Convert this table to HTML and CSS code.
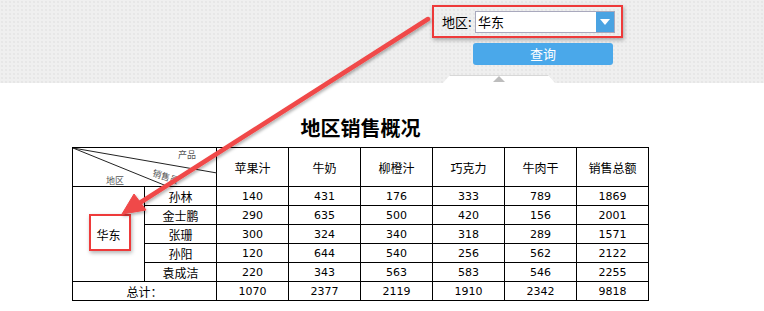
FILE: index.html
```html
<!DOCTYPE html>
<html lang="zh">
<head>
<meta charset="utf-8">
<link rel="stylesheet" href="styles.css">
</head>
<body>
<header class="toolbar">
  <div class="filters">
    <div class="filter-row">
      <span class="filter-label">地区:</span>
      <div class="select">
        <span class="select-value">华东</span>
        <span class="select-btn"><svg width="10" height="6" viewBox="0 0 10 6"><path d="M0 0H10L5 6Z" fill="#fff"/></svg></span>
      </div>
    </div>
    <button class="query-btn">查询</button>
    <div class="collapse-tab"><span class="tri"></span></div>
  </div>
</header>
<main class="report">
  <h1 class="title">地区销售概况</h1>
  <table class="sales">
    <colgroup><col><col><col><col><col><col><col><col></colgroup>
    <tr class="head">
      <td colspan="2" class="diag">
        <svg class="diag-lines" width="144" height="39" viewBox="0 0 144 39"><path d="M0 0L144 25M0 0L96 39" stroke="#222" stroke-width="1" fill="none"/></svg>
        <span class="d-prod">产品</span>
        <span class="d-sales">销售员</span>
        <span class="d-area">地区</span>
      </td>
      <th>苹果汁</th><th>牛奶</th><th>柳橙汁</th><th>巧克力</th><th>牛肉干</th><th>销售总额</th>
    </tr>
    <tr><td rowspan="5" class="area">华东</td><td class="name">孙林</td><td>140</td><td>431</td><td>176</td><td>333</td><td>789</td><td>1869</td></tr>
    <tr><td class="name">金士鹏</td><td>290</td><td>635</td><td>500</td><td>420</td><td>156</td><td>2001</td></tr>
    <tr><td class="name">张珊</td><td>300</td><td>324</td><td>340</td><td>318</td><td>289</td><td>1571</td></tr>
    <tr><td class="name">孙阳</td><td>120</td><td>644</td><td>540</td><td>256</td><td>562</td><td>2122</td></tr>
    <tr><td class="name">袁成洁</td><td>220</td><td>343</td><td>563</td><td>583</td><td>546</td><td>2255</td></tr>
    <tr><td colspan="2" class="name">总计：</td><td>1070</td><td>2377</td><td>2119</td><td>1910</td><td>2342</td><td>9818</td></tr>
  </table>
</main>
<div class="mark-box"></div>
<svg class="arrow" width="764" height="311" viewBox="0 0 764 311">
  <defs>
    <filter id="sh" x="-10%" y="-10%" width="120%" height="120%"><feDropShadow dx="1" dy="2" stdDeviation="1.5" flood-color="#000" flood-opacity="0.3"/></filter>
  </defs>
  <g filter="url(#sh)" fill="#f04848" stroke="#f04848">
    <path d="M428 19L138 204" stroke-width="4.5" stroke-linecap="round" fill="none"/>
    <path d="M122 214L134 194L146 210Z" stroke-width="1" stroke-linejoin="round"/>
  </g>
</svg>
</body>
</html>
```
FILE: styles.css
```css
* { box-sizing: border-box; }
html, body { margin: 0; padding: 0; background: #fff; }
body {
  width: 764px; height: 311px; overflow: hidden; position: relative;
  font-family: "Noto Sans CJK SC", "Liberation Sans", sans-serif;
  color: #000;
}
.toolbar {
  height: 83px;
  background-color: #efefef;
  background-image: radial-gradient(circle, #e2e2e2 0.6px, transparent 0.9px);
  background-size: 4px 4px;
  padding: 5px 0 0 432px;
}
.filters { display: flex; flex-direction: column; width: 191px; }
.filter-row {
  display: flex; align-items: center;
  width: 191px; height: 33px;
  border: 2px solid #ee3a3a;
  padding: 0 0 0 8px;
  box-shadow: 1px 2px 4px rgba(0,0,0,0.3);
}
.filter-label { font-size: 13px; width: 33px; line-height: 16px; }
.select {
  display: flex; width: 140px; height: 22px;
  border: 1px solid #a9a9bd; background: #fff;
}
.select-value { flex: 1; font-size: 13px; line-height: 20px; padding-left: 2px; }
.select-btn {
  width: 18px; background: #4aa3e2;
  display: flex; align-items: center; justify-content: center;
}
.query-btn {
  margin: 5px 0 0 41px; width: 140px; height: 22px;
  background: #4aa8ea; border: none; border-radius: 3px;
  color: #fff; font-family: inherit; font-size: 13px; line-height: 22px; padding: 0;
}
.collapse-tab {
  margin: 10px 0 0 11px; width: 112px; height: 8px;
  background: #fff;
  clip-path: polygon(7px 0, 105px 0, 112px 8px, 0 8px);
  display: flex; justify-content: center; align-items: flex-start;
  box-shadow: inset 0 1px 0 #d8d8d8;
}
.tri {
  margin-top: 1px; width: 0; height: 0;
  border-left: 6px solid transparent; border-right: 6px solid transparent;
  border-bottom: 6px solid #bdbdbd;
}
.report { width: 577px; margin-left: 72px; }
.title {
  margin: 33px 0 7px; text-align: center;
  font-size: 20px; line-height: 24px; font-weight: bold;
}
.sales {
  border-collapse: collapse; table-layout: fixed; width: 577px;
}
.sales col { width: 72px; }
.sales td, .sales th {
  border: 1px solid #000; padding: 0; text-align: center;
  font-weight: normal; height: 19px;
  font-family: "DejaVu Sans", "Liberation Sans", sans-serif;
  font-size: 11px; line-height: 17px;
}
.sales .head th, .sales .head td { height: 39px; }
.sales th, .sales .name, .sales .area {
  font-family: "Noto Sans CJK SC", sans-serif; font-size: 12px;
}
.diag { position: relative; }
.diag-lines { position: absolute; left: 0; top: 0; }
.d-prod, .d-sales, .d-area {
  position: absolute; font-size: 9px; line-height: 10px; color: #555;
  font-family: "Noto Sans CJK SC", serif;
}
.d-prod { left: 105px; top: 2px; }
.d-sales { left: 79px; top: 24px; transform: rotate(18deg); }
.d-area { left: 33px; top: 28px; }
.mark-box {
  position: absolute; left: 89px; top: 214px; width: 42px; height: 37px;
  border: 2px solid #ee3a3a; box-shadow: 1px 2px 4px rgba(0,0,0,0.3);
}
.arrow { position: absolute; left: 0; top: 0; pointer-events: none; }
```
